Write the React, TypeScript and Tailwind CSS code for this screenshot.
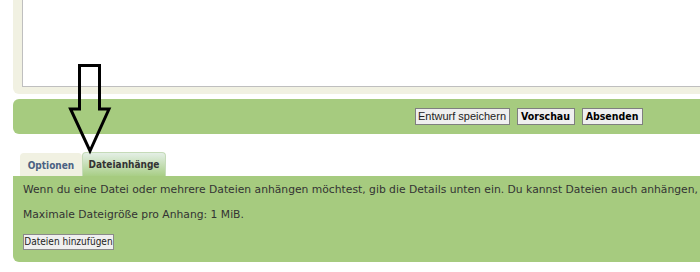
export default function App() {
  const font = { fontFamily: 'Verdana, "DejaVu Sans", sans-serif' }
  const condensed = { fontFamily: '"DejaVu Sans Condensed", "DejaVu Sans", sans-serif' }
  return (
    <div className="relative h-[272px] w-[700px] overflow-hidden bg-white" style={font}>
      {/* editor panel */}
      <div className="ml-[13px] -mt-[10px] h-[104px] w-[1030px] rounded-b-[6px] bg-[#f1f1e2] pl-[9px]">
        <div className="h-[97px] w-full border border-[#bfbfbf] bg-white" />
      </div>

      {/* submit bar */}
      <div className="ml-[13px] mt-[5px] flex h-[35px] w-[1030px] items-center justify-center gap-[7px] rounded-[6px] bg-[#a6cb7f] pl-[1px]">
        <button className="h-[17px] w-[95px] border border-[#7f7f7f] bg-[#efefef] text-[11px] leading-none text-[#222]" style={{ fontFamily: '"Liberation Sans", Arial, sans-serif' }}>
          Entwurf speichern
        </button>
        <button className="h-[17px] w-[58px] border border-[#7f7f7f] bg-[#efefef] text-[10.5px] font-bold leading-none text-black" style={condensed}>
          Vorschau
        </button>
        <button className="h-[17px] w-[61px] border border-[#7f7f7f] bg-[#efefef] text-[10.5px] font-bold leading-none text-black" style={condensed}>
          Absenden
        </button>
      </div>

      {/* tabs */}
      <div className="ml-[20px] mt-[18px] flex items-end" style={condensed}>
        <div className="flex h-[23px] w-[62px] items-center justify-center rounded-t-[4px] bg-[#f1f1e2] pt-[2px] text-[10px] font-bold text-[#4b6282]">
          Optionen
        </div>
        <div className="flex h-[24px] w-[84px] items-center justify-center rounded-t-[4px] border border-b-0 border-[#c5dbb8] bg-gradient-to-b from-[#e4efe6] to-[#a9ce86] text-[10px] font-bold text-[#333]">
          Dateianhänge
        </div>
      </div>

      {/* attachment panel */}
      <div className="ml-[13px] h-[86px] w-[1030px] rounded-b-[6px] bg-[#a6cb7f] px-[10px] pt-[6px] text-[10.75px] text-[#333]">
        <p className="whitespace-nowrap leading-[16px]">
          Wenn du eine Datei oder mehrere Dateien anhängen möchtest, gib die Details unten ein. Du kannst Dateien auch anhängen,
        </p>
        <p className="mt-[9px] leading-[16px]">Maximale Dateigröße pro Anhang: 1 MiB.</p>
        <button className="mt-[11px] h-[16px] w-[91px] border border-[#8a8a8a] bg-[#efefef] text-[10px] leading-none text-[#222]" style={condensed}>
          Dateien hinzufügen
        </button>
      </div>

      {/* arrow annotation */}
      <svg className="absolute left-0 top-0" width="700" height="272" viewBox="0 0 700 272">
        <path
          d="M79.5 65.5 H99.5 V109 H109 L90 151 L70.5 109 H79.5 Z"
          fill="none"
          stroke="#000"
          strokeWidth="3"
          strokeLinejoin="miter"
        />
      </svg>
    </div>
  )
}
